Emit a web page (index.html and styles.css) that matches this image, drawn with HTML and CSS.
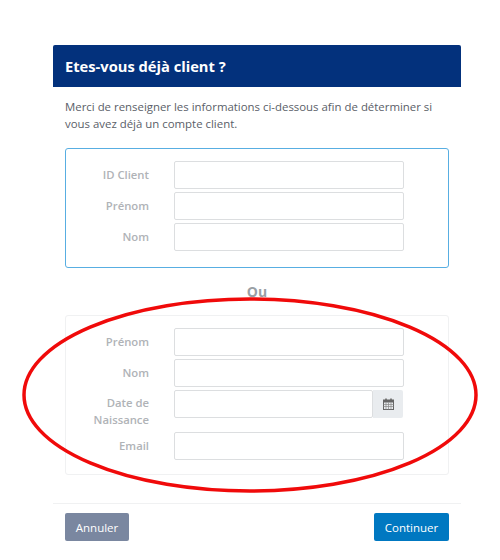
FILE: index.html
```html
<!DOCTYPE html>
<html lang="fr">
<head>
    <meta charset="UTF-8">
    <title>Etes-vous déjà client ?</title>
    <link rel="stylesheet" href="styles.css">
</head>
<body>

    <div class="modal">
        <h2 class="modal-title">Etes-vous déjà client ?</h2>

        <div class="modal-body">
            <p class="intro">Merci de renseigner les informations ci-dessous afin de déterminer si vous avez déjà un compte client.</p>

            <div class="box box-active">
                <div class="form-row">
                    <label class="form-label" for="idClient">ID Client</label>
                    <input class="form-input" type="text" id="idClient">
                </div>
                <div class="form-row">
                    <label class="form-label" for="prenom1">Prénom</label>
                    <input class="form-input" type="text" id="prenom1">
                </div>
                <div class="form-row">
                    <label class="form-label" for="nom1">Nom</label>
                    <input class="form-input" type="text" id="nom1">
                </div>
            </div>

            <div class="separator">Ou</div>

            <div class="box">
                <div class="form-row">
                    <label class="form-label" for="prenom2">Prénom</label>
                    <input class="form-input" type="text" id="prenom2">
                </div>
                <div class="form-row">
                    <label class="form-label" for="nom2">Nom</label>
                    <input class="form-input" type="text" id="nom2">
                </div>
                <div class="form-row form-row-date">
                    <label class="form-label" for="naissance">Date de Naissance</label>
                    <div class="date-group">
                        <input class="form-input" type="text" id="naissance">
                        <span class="date-addon">
                            <svg width="11" height="12" viewBox="0 0 11 12">
                                <rect x="0.5" y="2" width="10" height="9.5" fill="none" stroke="#666" stroke-width="1"/>
                                <rect x="0.5" y="2" width="10" height="2.5" fill="#666"/>
                                <rect x="2.2" y="0.5" width="1.6" height="3" fill="#666"/>
                                <rect x="7.2" y="0.5" width="1.6" height="3" fill="#666"/>
                                <path d="M0.5 6.5H10.5M0.5 8.5H10.5M3 4.5V11.5M5.5 4.5V11.5M8 4.5V11.5" stroke="#888" stroke-width="0.7"/>
                            </svg>
                        </span>
                    </div>
                </div>
                <div class="form-row">
                    <label class="form-label" for="email">Email</label>
                    <input class="form-input" type="text" id="email">
                </div>
            </div>
        </div>

        <div class="modal-footer">
            <button class="btn btn-cancel">Annuler</button>
            <button class="btn btn-primary">Continuer</button>
        </div>
    </div>

    <!-- red circle drawn over the second form -->
    <svg class="circle-mark" width="500" height="560" viewBox="0 0 500 560">
        <ellipse cx="250" cy="395" rx="226" ry="96" fill="none" stroke="#f00a0a" stroke-width="3.5"/>
    </svg>

</body>
</html>
```

FILE: styles.css
```css
body {
    margin: 0;
    background: #fff;
    font-family: 'Open Sans', sans-serif;
    color: #555;
}
.modal {
    width: 408px;
    margin: 45px 0 0 53px;
}
.modal-title {
    margin: 0;
    height: 42px;
    padding-left: 12px;
    line-height: 42px;
    background: #03317c;
    border-radius: 2px 2px 0 0;
    color: #fff;
    font-size: 14.7px;
    font-weight: 700;
}
.modal-body {
    padding: 11px 12px 28px 12px;
}
.intro {
    margin: 0 0 16px 0;
    font-size: 11.42px;
    line-height: 17px;
    color: #5a6068;
}
.box {
    display: flex;
    flex-direction: column;
    gap: 3px;
    padding: 12px 44px 14px 0;
    border: 1px solid #f0f1f2;
    border-radius: 3px;
}
.box-active {
    padding-bottom: 16px;
    border-color: #58aee2;
}
.separator {
    height: 47px;
    line-height: 47px;
    text-align: center;
    font-size: 14px;
    font-weight: 700;
    color: #9a9fa5;
}
.form-row {
    display: flex;
    align-items: center;
    gap: 25px;
}
.form-row-date {
    align-items: flex-start;
    margin-bottom: 11px;
}
.form-label {
    width: 83px;
    padding-bottom: 2px;
    text-align: right;
    font-size: 11.3px;
    line-height: 17px;
    font-weight: 600;
    color: #b0b3b7;
}
.form-row-date .form-label {
    padding: 4px 0 0 0;
    margin-bottom: -10px;
}
.form-input {
    flex: 1;
    min-width: 0;
    box-sizing: border-box;
    height: 28px;
    border: 1px solid #dcdee0;
    border-radius: 2px;
    background: #fff;
}
.date-group {
    flex: 1;
    display: flex;
    min-width: 0;
}
.date-addon {
    width: 30px;
    height: 28px;
    margin-right: 1px;
    display: flex;
    align-items: center;
    justify-content: center;
    background: #e9ecef;
    border-radius: 0 2px 2px 0;
}
.modal-footer {
    display: flex;
    justify-content: space-between;
    padding: 9px 12px 0 12px;
    border-top: 1px solid #f0f1f2;
}
.btn {
    height: 28px;
    border: none;
    border-radius: 2px;
    color: #fff;
    font-family: 'Open Sans', sans-serif;
    font-size: 11.5px;
    font-weight: 500;
}
.btn-cancel {
    width: 64px;
    background: #7a87a0;
}
.btn-primary {
    width: 75px;
    background: #0078c1;
}
.circle-mark {
    position: absolute;
    top: 0;
    left: 0;
    pointer-events: none;
}
```
